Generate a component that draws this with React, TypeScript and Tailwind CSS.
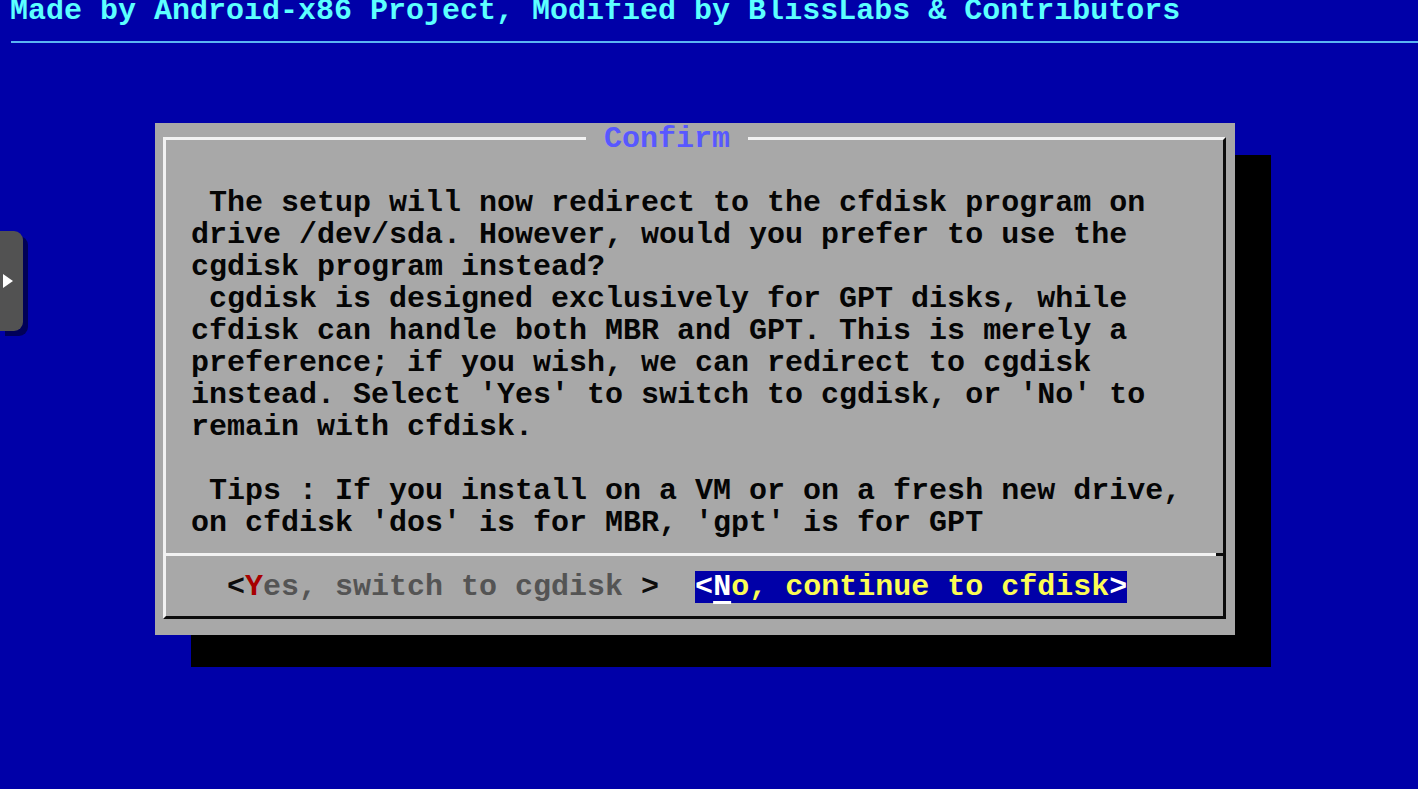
const bodyLines = [
  ' The setup will now redirect to the cfdisk program on',
  'drive /dev/sda. However, would you prefer to use the',
  'cgdisk program instead?',
  ' cgdisk is designed exclusively for GPT disks, while',
  'cfdisk can handle both MBR and GPT. This is merely a',
  'preference; if you wish, we can redirect to cgdisk',
  "instead. Select 'Yes' to switch to cgdisk, or 'No' to",
  'remain with cfdisk.',
  '',
  ' Tips : If you install on a VM or on a fresh new drive,',
  "on cfdisk 'dos' is for MBR, 'gpt' is for GPT",
];

function SideHandle() {
  return (
    <div className="absolute left-0 top-[231px] w-[23px] h-[100px] rounded-r-[9px] bg-[#525252] shadow-[5px_5px_0_0_#000058] flex items-center pl-[3px]">
      <svg width="10" height="14" viewBox="0 0 10 14">
        <path d="M0 0 L10 7 L0 14 Z" fill="#ffffff" />
      </svg>
    </div>
  );
}

function ConfirmDialog() {
  return (
    <div className="ml-[155px] mt-[80px] w-[1080px] h-[512px] bg-[#a8a8a8] shadow-[36px_32px_0_0_#000000] flex flex-col">
      <div className="mt-[14px] ml-[8px] mr-[9px] mb-[16px] flex-1 flex flex-col border-[3px] border-t-[#f2f2f2] border-l-[#f2f2f2] border-r-[#0c0c0c] border-b-[#0c0c0c]">
        <div className="-mt-[17px] ml-[420px] h-[32px] w-[162px] bg-[#a8a8a8] text-[#5858ff] whitespace-pre">
          {' Confirm '}
        </div>
        <div className="mt-[32px] pl-[25px] text-[#050505]">
          {bodyLines.map((line, i) => (
            <div key={i} className="h-[32px] whitespace-pre">
              {line}
            </div>
          ))}
        </div>
        <div className="mt-[14px] h-[3px] flex">
          <div className="flex-1 bg-[#f2f2f2]" />
          <div className="w-[7px] bg-[#0c0c0c]" />
        </div>
        <div className="mt-[15px] h-[32px] flex pl-[61px] whitespace-pre">
          <span className="text-[#0c0c0c]">{'<'}</span>
          <span className="text-[#a80000]">Y</span>
          <span className="text-[#545454]">es, switch to cgdisk</span>
          <span className="text-[#0c0c0c]">{' >'}</span>
          <span className="ml-[36px] bg-[#0000a8] text-[#fcfc54]">
            <span className="text-white">{'<'}</span>
            <span className="text-white underline decoration-[3px] underline-offset-[6px]">N</span>
            o, continue to cfdisk
            <span className="text-white">{'>'}</span>
          </span>
        </div>
      </div>
    </div>
  );
}

export default function App() {
  return (
    <div className="relative w-[1418px] h-[789px] overflow-hidden bg-[#0000a8] flex flex-col font-['Liberation_Mono',monospace] font-bold text-[30px] leading-[32px]">
      <div className="-mt-[5px] h-[32px] shrink-0 pl-[10px] text-[#5cffff] whitespace-pre">
        Made by Android-x86 Project, Modified by BlissLabs &amp; Contributors
      </div>
      <div className="mt-[14px] ml-[11px] h-[2px] shrink-0 bg-[#5ab4f2]" />
      <ConfirmDialog />
      <SideHandle />
    </div>
  );
}
